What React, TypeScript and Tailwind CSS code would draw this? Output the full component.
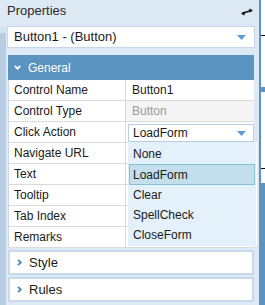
import React from 'react'

const rows: { label: string; value?: string; kind?: 'muted' | 'select' }[] = [
  { label: 'Control Name', value: 'Button1' },
  { label: 'Control Type', value: 'Button', kind: 'muted' },
  { label: 'Click Action', value: 'LoadForm', kind: 'select' },
  { label: 'Navigate URL' },
  { label: 'Text' },
  { label: 'Tooltip' },
  { label: 'Tab Index' },
  { label: 'Remarks' },
]

const actions = ['None', 'LoadForm', 'Clear', 'SpellCheck', 'CloseForm']

function Caret() {
  return (
    <svg width="9" height="5" viewBox="0 0 9 5" className="shrink-0">
      <path d="M0 0h9L4.5 5z" fill="#5b9bd5" />
    </svg>
  )
}

function Chevron({ open, color }: { open?: boolean; color: string }) {
  return (
    <svg width="7" height="7" viewBox="0 0 7 7" className="shrink-0">
      {open ? (
        <path d="M0.8 1.8L3.5 4.6L6.2 1.8" fill="none" stroke={color} strokeWidth="1.8" />
      ) : (
        <path d="M2 0.8L4.8 3.5L2 6.2" fill="none" stroke={color} strokeWidth="1.8" />
      )}
    </svg>
  )
}

export default function App() {
  return (
    <div
      className="w-[265px] h-[305px] flex overflow-hidden bg-white text-[#1a1a1a]"
      style={{ fontFamily: '"Liberation Sans", Arial, sans-serif' }}
    >
      {/* panel */}
      <div className="w-[259px] h-full flex flex-col bg-[#dde9f4]">
        <div className="h-[26px] flex items-center justify-between pl-[7px] pr-[6px] pb-[5px] shrink-0">
          <span className="text-[13px] text-[#2b2b2b]">Properties</span>
          <svg width="12" height="8" viewBox="0 0 12 8" className="mt-[2px]">
            <path d="M1 5.5L10 2.5" stroke="#111" strokeWidth="1.6" />
            <path d="M0 5.8L3.5 3.2L3.8 7.6z" fill="#111" />
            <path d="M12 2.2L8.2 0.4L8.7 4.8z" fill="#111" />
          </svg>
        </div>

        <div className="flex flex-1 min-h-0">
          <div className="w-[6px] flex flex-col shrink-0">
            <div className="h-[7px] bg-[#d3e2f0]" />
            <div className="flex-1 bg-[#b6cde3]" />
          </div>

          <div className="w-[249px] flex flex-col pl-[1px]">
            <div className="h-[22px] bg-white border border-[#c7d7e7] flex items-center justify-between pl-[6px] pr-[8px]">
              <span className="text-[13px]">Button1 - (Button)</span>
              <Caret />
            </div>

            <div className="mt-[7px] ml-[1px] w-[246px] flex flex-col">
              <div className="h-[25px] bg-[#5b93c1] flex items-center gap-[7px] pl-[6px] text-white text-[12px]">
                <Chevron open color="#ffffff" />
                <span>General</span>
              </div>

              <div className="relative bg-white border-l border-[#c9d9e8]">
                {rows.map((r) => (
                  <div key={r.label} className="grid grid-cols-[117px_1fr] h-[21px] border-b border-[#dadada] text-[12px]">
                    <div className="flex items-center pl-[5px] border-r border-[#dadada]">{r.label}</div>
                    {r.kind === 'select' ? (
                      <div className="flex items-center pl-[2px]">
                        <div className="w-full h-[18px] mt-[2px] border border-[#b6cfe4] bg-white flex items-center justify-between pl-[4px] pr-[7px]">
                          <span>{r.value}</span>
                          <Caret />
                        </div>
                      </div>
                    ) : (
                      <div
                        className={
                          r.kind === 'muted'
                            ? 'flex items-center pl-[6px] bg-[#f4f4f4] text-[#9a9a9a]'
                            : 'flex items-center pl-[6px]'
                        }
                      >
                        {r.value}
                      </div>
                    )}
                  </div>
                ))}

                <div className="absolute left-[119px] top-[62px] w-[129px] h-[104px] bg-[#e4f1fb] border-r border-white pt-[2px] text-[12px]">
                  {actions.map((a) => (
                    <div
                      key={a}
                      className={
                        a === 'LoadForm'
                          ? 'h-[21px] mx-[1px] flex items-center pl-[3px] bg-[#c2dfeb] border border-[#86c3d2]'
                          : 'h-[20px] mx-[1px] flex items-center pl-[4px]'
                      }
                    >
                      {a}
                    </div>
                  ))}
                </div>
              </div>

              <div className="mt-[2px] h-[25px] bg-white border-2 border-[#c8d9e9] flex items-center gap-[6px] pl-[6px] text-[13px]">
                <Chevron color="#4a86b8" />
                <span>Style</span>
              </div>
              <div className="mt-[2px] h-[25px] bg-white border-2 border-[#c8d9e9] flex items-center gap-[6px] pl-[6px] text-[13px]">
                <Chevron color="#4a86b8" />
                <span>Rules</span>
              </div>
            </div>
          </div>
        </div>
      </div>

      {/* edge of the canvas behind */}
      <div className="w-[6px] h-full flex flex-col border-l-2 border-[#5b93c1]">
        <div className="h-[35px] bg-white" />
        <div className="h-[1px] bg-black" />
        <div className="h-[51px] bg-white" />
        <div className="h-[5px] bg-[#5b93c1]" />
        <div className="h-[76px] bg-white" />
        <div className="h-[1px] bg-black" />
        <div className="h-[14px] bg-white" />
        <div className="flex-1 bg-[#5b93c1]" />
      </div>
    </div>
  )
}
